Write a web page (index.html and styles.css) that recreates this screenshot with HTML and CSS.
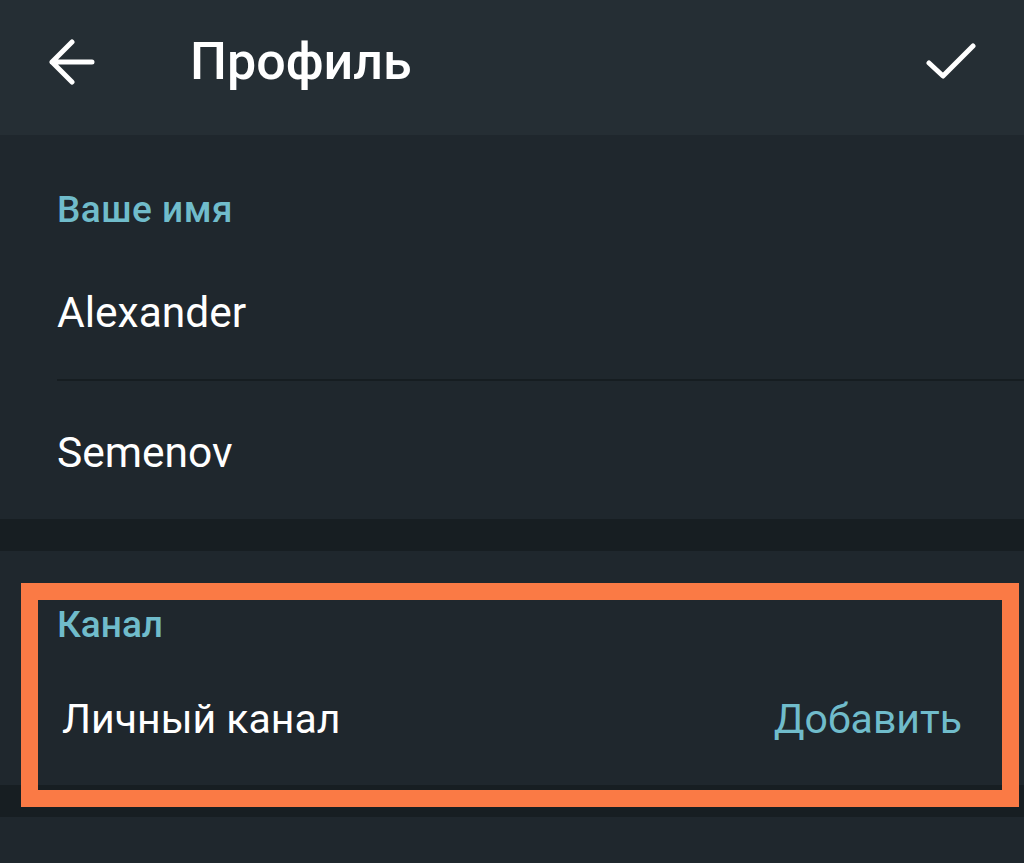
FILE: index.html
```html
<!DOCTYPE html>
<html lang="ru">
<head>
    <meta charset="UTF-8">
    <meta name="viewport" content="width=device-width, initial-scale=1.0">
    <title>Профиль</title>
    <link rel="stylesheet" href="styles.css">
</head>
<body>
    <div class="screen">
        <header class="toolbar">
            <svg class="back" width="46" height="46" viewBox="0 0 46 46">
                <path d="M3 23 H43 M23 3 L3 23 L23 43" fill="none" stroke="#fff" stroke-width="5" stroke-linecap="round" stroke-linejoin="round"/>
            </svg>
            <h1 class="title">Профиль</h1>
            <svg class="done" width="50" height="38" viewBox="0 0 50 38">
                <path d="M3 20 L17 33 L47 3" fill="none" stroke="#fff" stroke-width="5" stroke-linecap="round" stroke-linejoin="round"/>
            </svg>
        </header>

        <section class="section name">
            <div class="label">Ваше имя</div>
            <div class="field first">Alexander</div>
            <div class="divider"></div>
            <div class="field last">Semenov</div>
        </section>

        <div class="gap"></div>

        <section class="section channel">
            <div class="label small">Канал</div>
            <div class="row">
                <span>Личный канал</span>
                <span class="action">Добавить</span>
            </div>
            <div class="highlight"></div>
        </section>

        <div class="gap"></div>
    </div>
</body>
</html>
```

FILE: styles.css
```css
body {
    margin: 0;
    background: #1f272d;
    font-family: Roboto, "Noto Sans", sans-serif;
    color: #ffffff;
}
.screen {
    width: 1024px;
    height: 863px;
    overflow: hidden;
    position: relative;
}
.toolbar {
    height: 124px;
    padding: 0 0 11px 49px;
    background: #252e34;
    display: flex;
    align-items: center;
}
.title {
    margin: 0 0 0 95px;
    font-size: 52px;
    font-weight: 500;
    line-height: 64px;
}
.done {
    margin-left: auto;
    margin-right: 48px;
}
.section {
    background: #1f272d;
    position: relative;
}
.name {
    padding-top: 50px;
}
.label {
    padding-left: 57px;
    font-size: 37px;
    font-weight: 500;
    line-height: 50px;
    color: #70bccb;
    letter-spacing: 0.5px;
}
.field {
    padding-left: 57px;
    font-size: 42.5px;
    line-height: 50px;
}
.field.first {
    margin-top: 53px;
    padding-bottom: 41px;
}
.divider {
    height: 2px;
    margin-left: 57px;
    background: #161d21;
}
.field.last {
    margin-top: 47px;
    padding-bottom: 41px;
}
.gap {
    height: 32px;
    background: #171e22;
}
.channel {
    padding-top: 52px;
}
.label.small {
    font-size: 37px;
    line-height: 44px;
    letter-spacing: 0;
}
.row {
    display: flex;
    justify-content: space-between;
    margin-top: 47px;
    padding: 0 62px 41px 62px;
    font-size: 41px;
    line-height: 50px;
}
.action {
    color: #70bccb;
}
.highlight {
    position: absolute;
    left: 21px;
    top: 32px;
    width: 964px;
    height: 190px;
    border: 17px solid #fa7a45;
}
```
